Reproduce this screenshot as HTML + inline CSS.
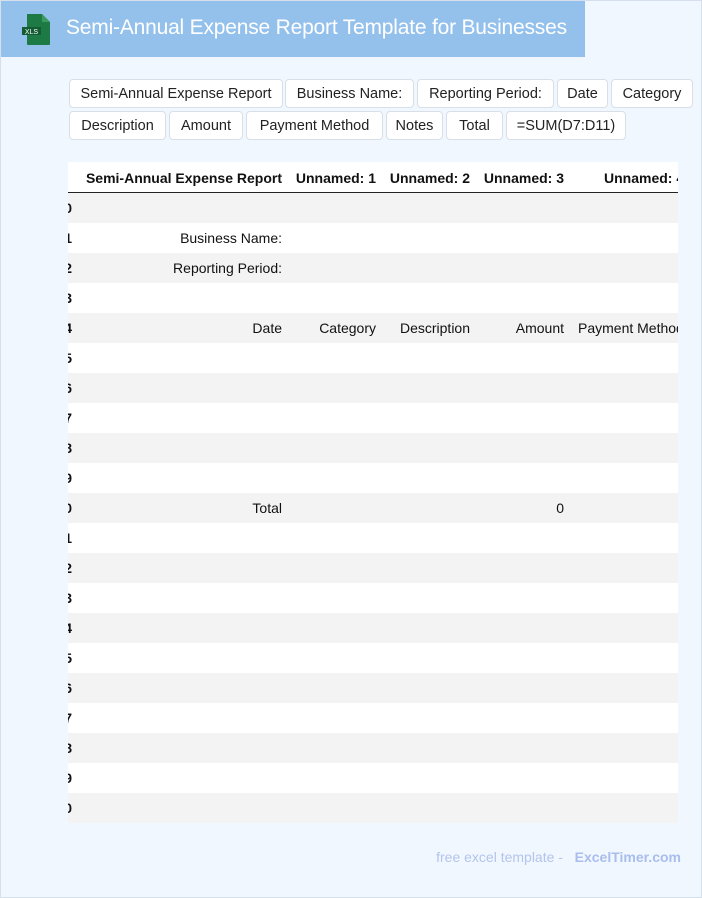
<!DOCTYPE html>
<html><head><meta charset="utf-8"><style>
*{margin:0;padding:0;box-sizing:border-box}
html,body{width:702px;height:898px;overflow:hidden}
body{background:#f0f7ff;font-family:"Liberation Sans",Arial,sans-serif;position:relative}
body:after{content:"";position:absolute;left:0;top:0;right:0;bottom:0;border:1px solid #d5e0ec;pointer-events:none}
.bar{position:absolute;left:0;top:0;width:585px;height:57px;background:#93c1ec}
.title{position:absolute;left:66px;top:16px;color:#fff;font-size:21px;white-space:nowrap;letter-spacing:-0.2px}
.btn{position:absolute;height:29px;border:1px solid #d9dfe6;border-radius:4px;background:#fff;font-size:14.5px;line-height:28px;text-align:center;color:#222;white-space:nowrap}
.tbl{position:absolute;left:68px;top:162px;width:610px;height:661px;overflow:hidden;background:#fff}
.hdr{position:absolute;top:0;left:0;width:610px;height:31px;border-bottom:1.5px solid #222}
.t{position:absolute;font-size:14px;white-space:nowrap;color:#111}
.b{font-weight:bold}
.row{position:absolute;left:0;width:610px;height:30px}
.g{background:#f3f3f3}
.foot{position:absolute;right:21px;top:849px;font-size:14px;color:#b4c4ec}
</style></head><body>
<div class="bar"></div>
<svg style="position:absolute;left:20px;top:13px" width="32" height="33" viewBox="0 0 32 33">
<path d="M7 1h15l8 8v22a1 1 0 0 1-1 1H8a1 1 0 0 1-1-1z" fill="#1d7a45"/>
<path d="M22 1v8h8z" fill="#3a9a60"/>
<rect x="2" y="14" width="19" height="8" fill="#145c33"/>
<text x="11.5" y="20.8" font-size="7" fill="#fff" text-anchor="middle" font-family="Liberation Sans">XLS</text>
</svg>
<div class="title">Semi-Annual Expense Report Template for Businesses</div>

<div class="btn" style="left:69px;top:79px;width:214px">Semi-Annual Expense Report</div>
<div class="btn" style="left:285px;top:79px;width:129px">Business Name:</div>
<div class="btn" style="left:417px;top:79px;width:137px">Reporting Period:</div>
<div class="btn" style="left:557px;top:79px;width:51px">Date</div>
<div class="btn" style="left:611px;top:79px;width:82px">Category</div>
<div class="btn" style="left:69px;top:111px;width:97px">Description</div>
<div class="btn" style="left:169px;top:111px;width:74px">Amount</div>
<div class="btn" style="left:246px;top:111px;width:137px">Payment Method</div>
<div class="btn" style="left:386px;top:111px;width:57px">Notes</div>
<div class="btn" style="left:446px;top:111px;width:57px">Total</div>
<div class="btn" style="left:506px;top:111px;width:120px">=SUM(D7:D11)</div>

<div class="tbl">
<div class="hdr">
<span class="t b" style="right:396px;top:8px">Semi-Annual Expense Report</span>
<span class="t b" style="right:302px;top:8px">Unnamed: 1</span>
<span class="t b" style="right:208px;top:8px">Unnamed: 2</span>
<span class="t b" style="right:114px;top:8px">Unnamed: 3</span>
<span class="t b" style="left:536px;top:8px">Unnamed: 4</span>
</div>
<div class="row g" style="top:31px"><span class="t b" style="right:606px;top:7px">10</span></div>
<div class="row" style="top:61px"><span class="t b" style="right:606px;top:7px">11</span><span class="t" style="right:396px;top:7px">Business Name:</span></div>
<div class="row g" style="top:91px"><span class="t b" style="right:606px;top:7px">12</span><span class="t" style="right:396px;top:7px">Reporting Period:</span></div>
<div class="row" style="top:121px"><span class="t b" style="right:606px;top:7px">13</span></div>
<div class="row g" style="top:151px"><span class="t b" style="right:606px;top:7px">14</span><span class="t" style="right:396px;top:7px">Date</span><span class="t" style="right:302px;top:7px">Category</span><span class="t" style="right:208px;top:7px">Description</span><span class="t" style="right:114px;top:7px">Amount</span><span class="t" style="left:510px;top:7px">Payment Method</span></div>
<div class="row" style="top:181px"><span class="t b" style="right:606px;top:7px">15</span></div>
<div class="row g" style="top:211px"><span class="t b" style="right:606px;top:7px">16</span></div>
<div class="row" style="top:241px"><span class="t b" style="right:606px;top:7px">17</span></div>
<div class="row g" style="top:271px"><span class="t b" style="right:606px;top:7px">18</span></div>
<div class="row" style="top:301px"><span class="t b" style="right:606px;top:7px">19</span></div>
<div class="row g" style="top:331px"><span class="t b" style="right:606px;top:7px">20</span><span class="t" style="right:396px;top:7px">Total</span><span class="t" style="right:114px;top:7px">0</span></div>
<div class="row" style="top:361px"><span class="t b" style="right:606px;top:7px">21</span></div>
<div class="row g" style="top:391px"><span class="t b" style="right:606px;top:7px">22</span></div>
<div class="row" style="top:421px"><span class="t b" style="right:606px;top:7px">23</span></div>
<div class="row g" style="top:451px"><span class="t b" style="right:606px;top:7px">24</span></div>
<div class="row" style="top:481px"><span class="t b" style="right:606px;top:7px">25</span></div>
<div class="row g" style="top:511px"><span class="t b" style="right:606px;top:7px">26</span></div>
<div class="row" style="top:541px"><span class="t b" style="right:606px;top:7px">27</span></div>
<div class="row g" style="top:571px"><span class="t b" style="right:606px;top:7px">28</span></div>
<div class="row" style="top:601px"><span class="t b" style="right:606px;top:7px">29</span></div>
<div class="row g" style="top:631px"><span class="t b" style="right:606px;top:7px">30</span></div>
</div>

<div class="foot">free excel template - &nbsp;&nbsp;<b style="color:#a9bdee">ExcelTimer.com</b></div>
</body></html>
